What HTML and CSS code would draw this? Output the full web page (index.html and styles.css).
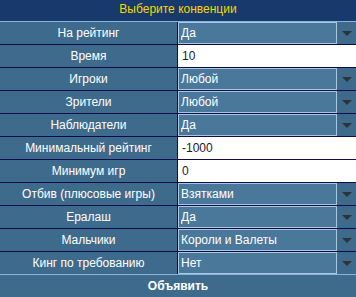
FILE: index.html
```html
<!DOCTYPE html>
<html lang="ru">
<head>
    <meta charset="UTF-8">
    <meta name="viewport" content="width=device-width, initial-scale=1.0">
    <title>Выберите конвенции</title>
    <link rel="stylesheet" href="styles.css">
</head>
<body>
    <div class="panel">
        <div class="title">Выберите конвенции</div>

        <form class="conventions">
            <div class="row">
                <label class="name">На рейтинг</label>
                <div class="value">
                    <select><option>Да</option><option>Нет</option></select>
                    <span class="arrow"></span>
                </div>
            </div>
            <div class="row">
                <label class="name">Время</label>
                <div class="value"><input type="text" value="10"></div>
            </div>
            <div class="row">
                <label class="name">Игроки</label>
                <div class="value">
                    <select><option>Любой</option></select>
                    <span class="arrow"></span>
                </div>
            </div>
            <div class="row">
                <label class="name">Зрители</label>
                <div class="value">
                    <select><option>Любой</option></select>
                    <span class="arrow"></span>
                </div>
            </div>
            <div class="row">
                <label class="name">Наблюдатели</label>
                <div class="value">
                    <select><option>Да</option><option>Нет</option></select>
                    <span class="arrow"></span>
                </div>
            </div>
            <div class="row">
                <label class="name">Минимальный рейтинг</label>
                <div class="value"><input type="text" value="-1000"></div>
            </div>
            <div class="row">
                <label class="name">Минимум игр</label>
                <div class="value"><input type="text" value="0"></div>
            </div>
            <div class="row">
                <label class="name">Отбив (плюсовые игры)</label>
                <div class="value">
                    <select><option>Взятками</option></select>
                    <span class="arrow"></span>
                </div>
            </div>
            <div class="row">
                <label class="name">Ералаш</label>
                <div class="value">
                    <select><option>Да</option><option>Нет</option></select>
                    <span class="arrow"></span>
                </div>
            </div>
            <div class="row">
                <label class="name">Мальчики</label>
                <div class="value">
                    <select><option>Короли и Валеты</option></select>
                    <span class="arrow"></span>
                </div>
            </div>
            <div class="row last">
                <label class="name">Кинг по требованию</label>
                <div class="value">
                    <select><option>Нет</option><option>Да</option></select>
                    <span class="arrow"></span>
                </div>
            </div>
            <button type="submit" class="announce">Объявить</button>
        </form>
    </div>
</body>
</html>
```

FILE: styles.css
```css
body {
    margin: 0;
    font-family: 'Liberation Sans', Arial, sans-serif;
    font-size: 12px;
    background-color: #3e6b8b;
}
.panel {
    width: 356px;
    height: 297px;
    overflow: hidden;
    background-color: #3e6b8b;
}
.title {
    height: 21px;
    line-height: 19px;
    text-align: center;
    color: #f5d800;
    background-color: #17396b;
    border-bottom: 1px solid #86b4de;
}
.conventions {
    margin: 0;
}
.row {
    display: flex;
    height: 22px;
    border-bottom: 1px solid #0b0b4e;
}
.row.last {
    border-bottom: 1px solid #86b4de;
}
.name {
    width: 177px;
    flex-shrink: 0;
    border-right: 1px solid #0b0b4e;
    text-align: center;
    line-height: 22px;
    color: #ffffff;
}
.value {
    flex-grow: 1;
    display: flex;
    align-items: stretch;
}
select {
    appearance: none;
    -webkit-appearance: none;
    width: 159px;
    margin: 0;
    padding: 0 2px;
    border: 1px solid #a9c7de;
    border-radius: 0;
    background-color: #4a789b;
    color: #ffffff;
    font-family: inherit;
    font-size: 12px;
    outline: none;
}
.arrow {
    flex-grow: 1;
    display: flex;
    align-items: center;
    justify-content: center;
}
.arrow::before {
    content: '';
    border-left: 5px solid transparent;
    border-right: 5px solid transparent;
    border-top: 5px solid #2e3338;
}
input[type="text"] {
    flex-grow: 1;
    width: 100%;
    margin: 0;
    padding: 0 4px;
    border: none;
    background-color: #ffffff;
    color: #1a1a2a;
    font-family: inherit;
    font-size: 12px;
    outline: none;
}
.announce {
    display: block;
    width: 100%;
    height: 22px;
    margin: 0;
    padding: 0;
    border: none;
    background-color: #3e6b8b;
    color: #ffffff;
    font-family: inherit;
    font-size: 12px;
    font-weight: bold;
    cursor: pointer;
}
```
